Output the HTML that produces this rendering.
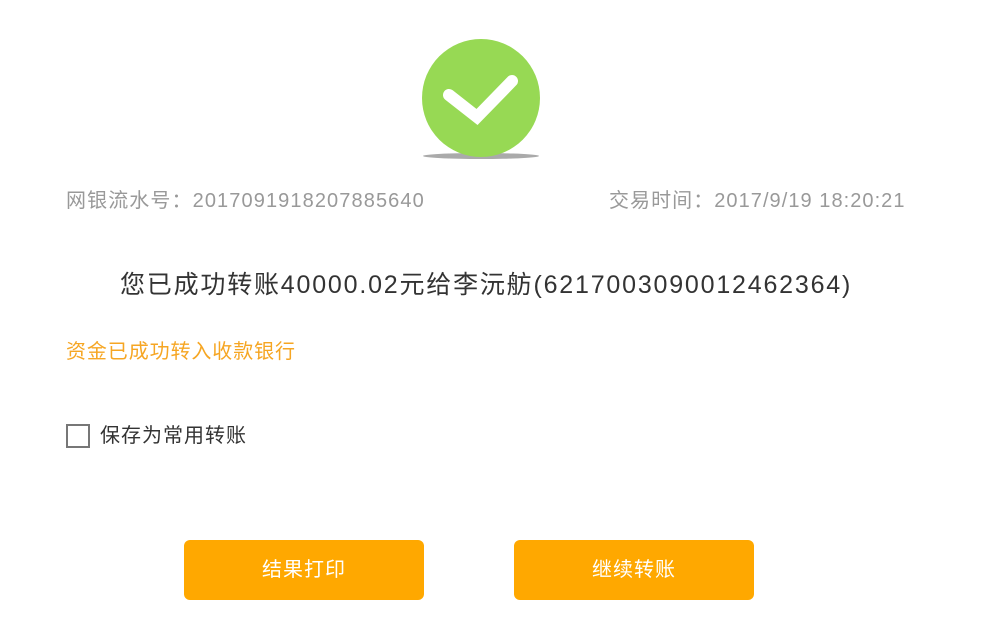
<!DOCTYPE html>
<html><head><meta charset="utf-8"><style>
body{margin:0;width:983px;height:620px;background:#fff;position:relative;overflow:hidden;font-family:"Liberation Sans","Noto Sans CJK SC",sans-serif}
.t{position:absolute;white-space:nowrap;line-height:1}
.btn{position:absolute;top:540px;width:240px;height:60px;background:#ffa800;border-radius:6px;color:#fff;font-size:20px;line-height:60px;text-align:center;letter-spacing:1px}
</style></head><body>
<svg style="position:absolute;left:0;top:0" width="983" height="200">
<ellipse cx="481" cy="156" rx="58" ry="3" fill="#aaa"/>
<circle cx="481" cy="98" r="59" fill="#97d954"/>
<polyline points="449,95 477,117 512,81" fill="none" stroke="#fff" stroke-width="12" stroke-linecap="round" stroke-linejoin="miter"/>
</svg>
<div class="t" style="left:66px;top:191px;font-size:20px;color:#999;letter-spacing:1.1px">网银流水号：2017091918207885640</div>
<div class="t" style="left:609px;top:191px;font-size:20px;color:#999;letter-spacing:1.05px">交易时间：2017/9/19 18:20:21</div>
<div class="t" style="left:120px;top:273px;font-size:25px;color:#333;letter-spacing:1.8px">您已成功转账40000.02元给李沅舫(6217003090012462364)</div>
<div class="t" style="left:66px;top:342px;font-size:20px;color:#f6a623;letter-spacing:0.9px">资金已成功转入收款银行</div>
<div style="position:absolute;left:66px;top:424px;width:20px;height:20px;border:2px solid #777"></div>
<div class="t" style="left:100px;top:426px;font-size:20px;color:#333;letter-spacing:1px">保存为常用转账</div>
<div class="btn" style="left:184px">结果打印</div>
<div class="btn" style="left:514px">继续转账</div>
</body></html>
